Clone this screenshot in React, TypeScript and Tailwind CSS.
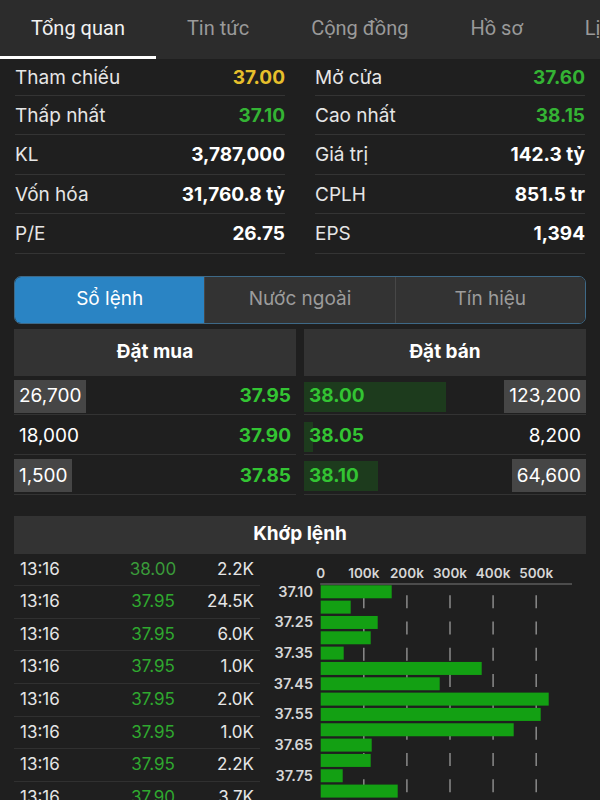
import React from "react";

const tabs = ["Tổng quan", "Tin tức", "Cộng đồng", "Hồ sơ", "Lịch sử"];

type Stat = { label: string; value: string; color?: string };

const leftStats: Stat[] = [
  { label: "Tham chiếu", value: "37.00", color: "text-[#e6bf2c]" },
  { label: "Thấp nhất", value: "37.10", color: "text-[#34b334]" },
  { label: "KL", value: "3,787,000" },
  { label: "Vốn hóa", value: "31,760.8 tỷ" },
  { label: "P/E", value: "26.75" },
];
const rightStats: Stat[] = [
  { label: "Mở cửa", value: "37.60", color: "text-[#34b334]" },
  { label: "Cao nhất", value: "38.15", color: "text-[#34b334]" },
  { label: "Giá trị", value: "142.3 tỷ" },
  { label: "CPLH", value: "851.5 tr" },
  { label: "EPS", value: "1,394" },
];

const bids = [
  { vol: "26,700", price: "37.95", box: true },
  { vol: "18,000", price: "37.90", box: false },
  { vol: "1,500", price: "37.85", box: true },
];
const asks = [
  { vol: "123,200", price: "38.00", box: true, bar: 142 },
  { vol: "8,200", price: "38.05", box: false, bar: 9 },
  { vol: "64,600", price: "38.10", box: true, bar: 74 },
];

const trades = [
  { p: "38.00", v: "2.2K", dim: true },
  { p: "37.95", v: "24.5K" },
  { p: "37.95", v: "6.0K" },
  { p: "37.95", v: "1.0K" },
  { p: "37.95", v: "2.0K" },
  { p: "37.95", v: "1.0K" },
  { p: "37.95", v: "2.2K" },
  { p: "37.90", v: "3.7K" },
];

const bars = [71, 30, 57, 50, 23, 161, 119, 228, 220, 193, 51, 50, 22, 77, 26];
const barLabels: Record<number, string> = {
  0: "37.10",
  2: "37.25",
  4: "37.35",
  6: "37.45",
  8: "37.55",
  10: "37.65",
  12: "37.75",
  14: "37.85",
};

function StatCol({ items }: { items: Stat[] }) {
  return (
    <div className="flex flex-col">
      {items.map((s, i) => (
        <div
          key={s.label}
          className={`flex items-center justify-between border-b border-[#343434] pt-[2px] ${i === 0 ? "h-[37px]" : "h-[39.4px]"}`}
        >
          <span className="text-[19px] text-[#e6e6e6]">{s.label}</span>
          <span className={`text-[19px] font-bold ${s.color ?? "text-white"}`}>{s.value}</span>
        </div>
      ))}
    </div>
  );
}

function Chart() {
  const ticks = [0, 100, 200, 300, 400, 500];
  const x0 = 60.7;
  const step = 43.1;
  return (
    <svg width="326" height="247" className="block">
      {ticks.map((t, i) => (
        <text
          key={t}
          x={x0 + i * step}
          y={24}
          textAnchor="middle"
          fontSize="13.5"
          fontWeight="600"
          fill="#d6d6d6"
          fontFamily="Inter, sans-serif"
        >
          {t === 0 ? "0" : `${t}k`}
        </text>
      ))}
      {ticks.slice(1).map((t, i) => (
        <line
          key={t}
          x1={x0 + (i + 1) * step}
          x2={x0 + (i + 1) * step}
          y1={41.2}
          y2={247}
          stroke="#8a8a8a"
          strokeWidth="1.5"
          strokeDasharray="13 13.3"
        />
      ))}
      <line x1={x0 - 0.5} x2={312} y1={30} y2={30} stroke="#7a7a7a" strokeWidth="1.2" />
      {bars.map((w, i) => (
        <rect key={i} x={x0} y={31.3 + i * 15.33} width={w} height={13} fill="#13a013" />
      ))}
      {bars.map((_, i) =>
        barLabels[i] ? (
          <text
            key={`l${i}`}
            x={53}
            y={31.3 + i * 15.33 + 11.5}
            textAnchor="end"
            fontSize="14.5"
            fontWeight="600"
            fill="#d6d6d6"
            fontFamily="Inter, sans-serif"
          >
            {barLabels[i]}
          </text>
        ) : null
      )}
    </svg>
  );
}

export default function App() {
  return (
    <div className="w-[600px] h-[800px] overflow-hidden bg-[#1f1f1f] font-['Inter',sans-serif] text-white">
      {/* Top tabs */}
      <div className="flex h-[59px] bg-[#2c2c2c] whitespace-nowrap overflow-hidden font-['Roboto',sans-serif]">
        {tabs.map((t, i) => (
          <div key={t} className="relative flex h-[59px] shrink-0 flex-col">
            <div
              className={`flex h-[56px] items-center px-[31px] text-[20px] ${i === 0 ? "text-[#f2f2f2]" : "text-[#9a9a9a]"}`}
            >
              {t}
            </div>
            {i === 0 && <div className="h-[3px] bg-white" />}
          </div>
        ))}
      </div>

      {/* Stats */}
      <div className="grid grid-cols-2 gap-x-[30px] px-[15px]">
        <StatCol items={leftStats} />
        <StatCol items={rightStats} />
      </div>

      {/* Segmented control */}
      <div className="mx-[14px] mt-[22px] flex h-[48px] overflow-hidden rounded-[7px] border-[1.5px] border-[#3e6987] text-[19px]">
        <div className="flex flex-1 items-center justify-center bg-[#2a84c4] text-white">Sổ lệnh</div>
        <div className="flex flex-1 items-center justify-center border-l border-[#474747] bg-[#333333] text-[#9c9c9c]">
          Nước ngoài
        </div>
        <div className="flex flex-1 items-center justify-center border-l border-[#474747] bg-[#333333] text-[#9c9c9c]">
          Tín hiệu
        </div>
      </div>

      {/* Order book */}
      <div className="mx-[14px] mt-[5px] grid grid-cols-2 gap-x-[8px]">
        <div className="flex flex-col">
          <div className="flex h-[47px] items-center justify-center bg-[#333333] text-[19px] font-bold">Đặt mua</div>
          {bids.map((b) => (
            <div key={b.price} className="flex h-[39.7px] items-center justify-between border-b border-[#333333] pt-[3px]">
              <span className={`flex h-[33px] items-center px-[5px] text-[19px] ${b.box ? "bg-[#464646]" : ""}`}>
                {b.vol}
              </span>
              <span className="pr-[5px] text-[19px] font-bold text-[#33c433]">{b.price}</span>
            </div>
          ))}
        </div>
        <div className="flex flex-col">
          <div className="flex h-[47px] items-center justify-center bg-[#333333] text-[19px] font-bold">Đặt bán</div>
          {asks.map((a) => (
            <div key={a.price} className="relative flex h-[39.7px] items-center justify-between border-b border-[#333333] pt-[3px]">
              <div className="absolute left-0 top-[6.5px] h-[30px] bg-[#1d3b1d]" style={{ width: a.bar }} />
              <span className="relative pl-[5px] text-[19px] font-bold text-[#33c433]">{a.price}</span>
              <span className={`relative flex h-[33px] items-center px-[5px] text-[19px] ${a.box ? "bg-[#464646]" : ""}`}>
                {a.vol}
              </span>
            </div>
          ))}
        </div>
      </div>

      {/* Khớp lệnh */}
      <div className="mx-[14px] mt-[21px] flex h-[38px] items-center justify-center bg-[#333333] text-[19px] font-bold">
        Khớp lệnh
      </div>
      <div className="ml-[14px] flex">
        <div className="flex w-[246px] shrink-0 flex-col">
          {trades.map((t, i) => (
            <div key={i} className="flex h-[32.6px] items-center border-b border-[#303030] text-[17px]">
              <span className="w-[95px] pl-[6px] text-[#e6e6e6]">13:16</span>
              <span className={`w-[88px] text-center ${t.dim ? "text-[#3a9a3a]" : "text-[#2fa82f]"}`}>{t.p}</span>
              <span className="flex-1 pr-[6px] text-right text-[#e6e6e6]">{t.v}</span>
            </div>
          ))}
        </div>
        <Chart />
      </div>
    </div>
  );
}
